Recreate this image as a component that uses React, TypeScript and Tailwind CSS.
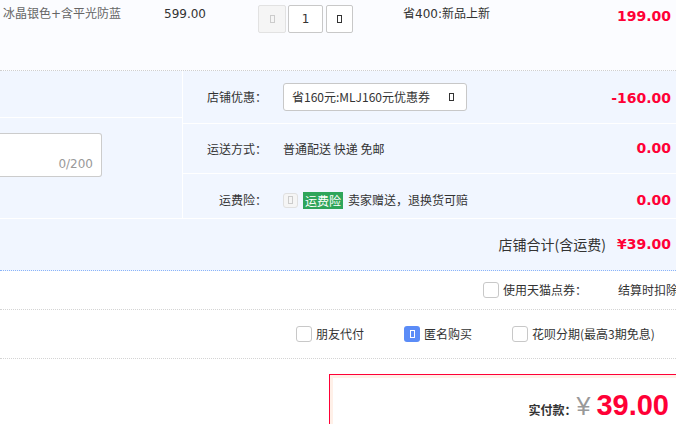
import React from 'react';

const cjk = { fontFamily: '"Noto Sans CJK SC", sans-serif' };
const mixed = { fontFamily: '"DejaVu Sans", "Noto Sans CJK SC", sans-serif' };
const num = { fontFamily: '"DejaVu Sans", sans-serif' };

// stands in for the missing icon-font glyph
function Tofu({ className = '' }: { className?: string }) {
  return <span className={'inline-block w-[5px] h-[8px] border ' + className} />;
}

function Check({ checked = false, label }: { checked?: boolean; label: string }) {
  return (
    <div className="flex items-center">
      {checked ? (
        <span className="w-[16px] h-[16px] rounded-[3px] bg-[#5b8cf7] flex items-center justify-center">
          <Tofu className="border-white" />
        </span>
      ) : (
        <span className="w-[16px] h-[16px] rounded-[3px] border border-[#c8c8c8] bg-white" />
      )}
      <span className="ml-[4px] text-[12px] text-[#333]">{label}</span>
    </div>
  );
}

export default function App() {
  return (
    <div className="w-[676px] h-[424px] overflow-hidden bg-white text-[#333]" style={cjk}>
      {/* item row */}
      <div className="h-[71px] bg-[#fbfcff] border-b border-dotted border-[#cfcfcf] flex items-start pt-[5px] pl-[3px] pr-[5px] text-[12px] leading-[18px]">
        <div className="w-[161px] text-[#666]" style={mixed}>冰晶银色+含平光防蓝</div>
        <div className="w-[94px]" style={num}>599.00</div>
        <div className="flex">
          <div className="w-[28px] h-[28px] rounded-[2px] border border-[#e2e2e2] bg-[#f5f5f5] flex items-center justify-center">
            <Tofu className="border-[#ccc]" />
          </div>
          <div className="ml-[2px] w-[35px] h-[28px] rounded-[2px] border border-[#c8c8c8] bg-white flex items-center justify-center" style={num}>1</div>
          <div className="ml-[3px] w-[27px] h-[28px] rounded-[2px] border border-[#c8c8c8] bg-white flex items-center justify-center">
            <Tofu className="border-[#333]" />
          </div>
        </div>
        <div className="ml-[50px]" style={mixed}>省400:新品上新</div>
        <div className="ml-auto mt-[2px] text-[14px] font-bold text-[#ff0036]" style={num}>199.00</div>
      </div>

      {/* shop section */}
      <div className="h-[200px] bg-[#f1f6ff] border-b border-dotted border-[#8ab4f8] flex flex-col">
        <div className="h-[148px] border-b border-white flex">
          <div className="w-[183px] border-r border-white flex flex-col">
            <div className="h-[47px] border-b border-white" />
            <div className="pt-[15px]">
              <div className="w-[102px] h-[44px] bg-white border border-l-0 border-[#cccccc] rounded-r-[3px] flex items-end justify-end pr-[8px] pb-[4px]">
                <span className="text-[12px] leading-[16px] text-[#999]" style={num}>0/200</span>
              </div>
            </div>
          </div>
          <div className="flex-1 flex flex-col text-[12px]">
            <div className="h-[53px] border-b border-white flex items-center pr-[5px]">
              <div className="w-[84px] text-right">店铺优惠：</div>
              <div className="ml-[16px] w-[184px] h-[28px] bg-white border border-[#c8c8c8] rounded-[3px] flex items-center pl-[8px] pr-[12px]">
                <span>省160元:MLJ160元优惠券</span>
                <Tofu className="ml-auto border-[#333]" />
              </div>
              <div className="ml-auto mt-[2px] text-[14px] font-bold text-[#ff0036]" style={num}>-160.00</div>
            </div>
            <div className="h-[50px] border-b border-white flex items-center pr-[5px]">
              <div className="w-[84px] text-right">运送方式：</div>
              <div className="ml-[16px]">普通配送 快递 免邮</div>
              <div className="ml-auto text-[14px] font-bold text-[#ff0036]" style={num}>0.00</div>
            </div>
            <div className="flex-1 flex items-center pt-[8px] pr-[5px]">
              <div className="w-[84px] text-right">运费险：</div>
              <div className="ml-[16px] w-[15px] h-[15px] rounded-[3px] border border-[#e0e0e0] bg-[#f5f5f5] flex items-center justify-center">
                <Tofu className="w-[4px] h-[6px] border-[#ccc]" />
              </div>
              <div className="ml-[5px] h-[17px] px-[2px] bg-[#2ea55a] text-white leading-[17px]">运费险</div>
              <div className="ml-[5px]">卖家赠送，退换货可赔</div>
              <div className="ml-auto text-[14px] font-bold text-[#ff0036]" style={num}>0.00</div>
            </div>
          </div>
        </div>
        <div className="flex-1 flex items-center justify-end pr-[5px]">
          <span className="text-[14px]">店铺合计(含运费)</span>
          <span className="ml-[11px] text-[14px] font-bold text-[#ff0036]" style={num}>¥39.00</span>
        </div>
      </div>

      {/* options */}
      <div className="h-[39px] border-b border-dotted border-[#d4d4d4] flex items-center pl-[483px] whitespace-nowrap">
        <Check label="使用天猫点券：" />
        <span className="ml-[31px] text-[12px]">结算时扣除</span>
      </div>
      <div className="h-[49px] border-b border-dotted border-[#d4d4d4] flex items-center pl-[296px] gap-[40px] whitespace-nowrap">
        <Check label="朋友代付" />
        <Check checked label="匿名购买" />
        <Check label="花呗分期(最高3期免息)" />
      </div>

      {/* pay box */}
      <div className="mt-[15px] ml-[329px] w-[349px] h-[60px] border border-[#ff0036]">
        <div className="h-full border-[3px] border-r-0 border-b-0 border-[#fff0e8] bg-white flex items-baseline justify-end pr-[8px] pt-[11px] whitespace-nowrap">
          <span className="text-[12px] font-bold">实付款：</span>
          <span className="text-[25px] text-[#999] leading-[32px]" style={{ fontFamily: '"Liberation Sans", sans-serif' }}>¥</span>
          <span className="ml-[6px] text-[29px] font-bold text-[#ff0036] leading-[32px]" style={{ fontFamily: '"Liberation Sans", sans-serif' }}>39.00</span>
        </div>
      </div>
    </div>
  );
}
